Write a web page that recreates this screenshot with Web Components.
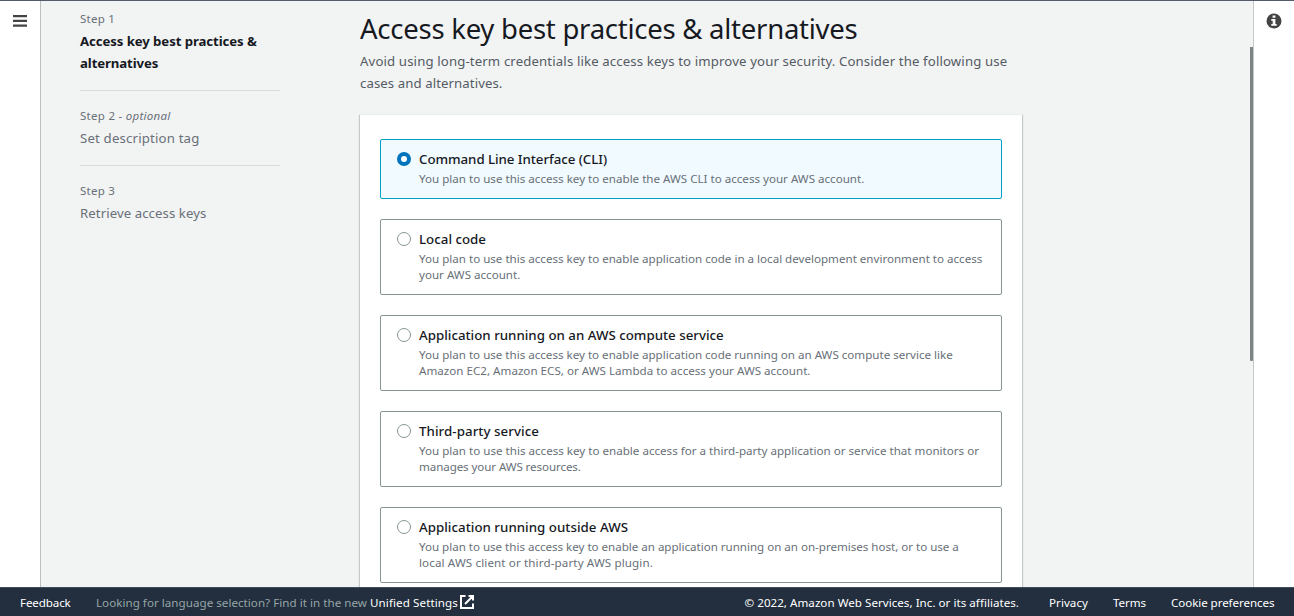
<!DOCTYPE html>
<html lang="en">
<head>
<meta charset="utf-8">
<title>Access key best practices &amp; alternatives</title>
<style>
html,body{margin:0;height:100%;overflow:hidden;font-family:"Noto Sans","Open Sans",sans-serif;color:#16191f;background:#f2f3f3}
</style>
</head>
<body>
<console-app></console-app>
<script>
function define(name, html, init) {
  const t = document.createElement('template');
  t.innerHTML = html;
  customElements.define(name, class extends HTMLElement {
    connectedCallback() {
      if (this.shadowRoot) return;
      this.attachShadow({mode: 'open'}).append(t.content.cloneNode(true));
      if (init) init.call(this, this.shadowRoot);
    }
  });
}

/* One line of text, tracked so that it spans the width given in "w". */
define('text-line', `<style>
:host{display:block;white-space:nowrap}
span{display:inline-block}
</style><span><slot></slot></span>`, function (root) {
  const span = root.querySelector('span');
  const target = parseFloat(this.getAttribute('w'));
  const count = this.textContent.length;
  const natural = span.getBoundingClientRect().width;
  if (target && natural) span.style.letterSpacing = ((target - natural) / count).toFixed(4) + 'px';
});

define('side-rail', `<style>
:host{display:flex;justify-content:center;width:40px;flex:none;background:#fff;box-sizing:border-box;padding-top:12px}
</style><slot></slot>`);

define('menu-icon', `<style>:host{display:block;width:16px;height:16px}svg{display:block}</style>
<svg width="16" height="16" viewBox="0 0 16 16"><path d="M1 3.2h14M1 7.9h14M1 12.6h14" stroke="#444" stroke-width="2.3"/></svg>`);

define('info-icon', `<style>:host{display:block;width:16px;height:16px}svg{display:block}</style>
<svg width="16" height="16" viewBox="0 0 16 16"><circle cx="8" cy="8" r="7.5" fill="#444"/><path d="M6.6 2.4h2.8v2.4H6.6zM5.3 6h4.1v5.1h1.3v1.7H5.3v-1.7h1.4V7.7H5.3z" fill="#fff"/></svg>`);

define('external-icon', `<style>:host{display:block;width:14px;height:14px}svg{display:block}</style>
<svg width="14" height="14" viewBox="0 0 14 14" fill="none" stroke="#fff" stroke-width="2"><path d="M5.5 1H1v12h12V8.5M8.5 1H13v4.5M13 1L5 9"/></svg>`);

define('wizard-step', `<style>
:host{display:block;color:#687078;padding-bottom:16px;margin-bottom:14px;border-bottom:1px solid #d5dbdb}
:host([last]){border:0}
:host([active]) .title{color:#16191f;font-weight:700}
.label{font-size:11.5px;line-height:22px}
.title{font-size:13.2px;line-height:22px}
</style><div class="label"><slot name="label"></slot></div><div class="title"><slot></slot></div>`);

define('wizard-nav', `<style>
:host{display:block;width:200px;flex:none;padding-top:7px}
i{font-style:italic}
</style>
<wizard-step active><text-line slot="label" w="35">Step 1</text-line><text-line w="176.7">Access key best practices &amp;</text-line><text-line w="78.3">alternatives</text-line></wizard-step>
<wizard-step><text-line slot="label" w="90.5">Step 2 - <i>optional</i></text-line><text-line w="119.5">Set description tag</text-line></wizard-step>
<wizard-step last><text-line slot="label" w="35">Step 3</text-line><text-line w="126.4">Retrieve access keys</text-line></wizard-step>`);

define('page-header', `<style>
:host{display:block;padding-top:10px;height:103px}
h1{margin:0;font-size:27.5px;font-weight:400;line-height:36px;height:39px}
p{margin:0;font-size:13.2px;line-height:22px;color:#545b64}
</style><h1><slot name="title"></slot></h1><p><slot></slot></p>`);

define('option-tile', `<style>
:host{display:flex;box-sizing:border-box;border:1px solid #879596;border-radius:2px;background:#fff;padding:8px 16px 11px;gap:8px}
.radio{box-sizing:border-box;width:14px;height:14px;flex:none;border:1px solid #879596;border-radius:50%;background:#fff;margin-top:4px}
:host([checked]){background:#f1faff;border-color:#00a1c9}
:host([checked]) .radio{border:4px solid #0073bb}
.title{font-size:13.3px;font-weight:500;line-height:22px;height:23px;color:#16191f}
.desc{font-size:11.6px;line-height:16px;color:#687078}
</style><div class="radio"></div><div><div class="title"><slot name="title"></slot></div><div class="desc"><slot></slot></div></div>`);

define('tile-panel', `<style>
:host{display:grid;gap:20px;box-sizing:border-box;width:662px;padding:24px 20px;border-top:1px solid #eaeded;background:#fff;
box-shadow:0 1px 1px 0 rgba(0,28,36,.3),1px 1px 1px 0 rgba(0,28,36,.15),-1px 1px 1px 0 rgba(0,28,36,.15)}
</style><slot></slot>`);

define('scroll-thumb', `<style>
:host{position:absolute;right:0;top:46px;width:3px;height:314px;background:#7d8382;border-radius:0 0 1px 1px}
</style>`);

define('console-footer', `<style>
:host{display:flex;align-items:center;box-sizing:border-box;height:29px;flex:none;padding:1px 19.5px 0 20px;background:#232f3e;border-top:1px solid #414d5c;color:#fff;font-size:11.6px;line-height:28px}
.hint{display:flex;align-items:center;margin-left:25.3px;color:#95a5a6}
.hint text-line+text-line{color:#fff;margin-left:3px}
external-icon{margin:-1px 0 0 2px}
.links{display:flex;gap:25px;margin-left:auto}
.links text-line:first-child{margin-right:5px}
</style>
<text-line w="50.7">Feedback</text-line>
<div class="hint"><text-line w="271">Looking for language selection? Find it in the new</text-line><text-line w="88">Unified Settings</text-line><external-icon></external-icon></div>
<div class="links"><text-line w="274.5">© 2022, Amazon Web Services, Inc. or its affiliates.</text-line><text-line w="39">Privacy</text-line><text-line w="33">Terms</text-line><text-line w="103.5">Cookie preferences</text-line></div>`);

define('console-app', `<style>
:host{display:flex;flex-direction:column;height:100vh;box-sizing:border-box;border-top:1px solid #545b6b}
.body{display:flex;flex:1;min-height:0}
main{position:relative;display:flex;gap:80px;flex:1;min-width:0;overflow:hidden;box-sizing:border-box;padding-left:39px;border-left:1px solid #bcc0c1;background:#f2f3f3}
.scroll{border-right:1px solid #c4c8c8}
.content{width:662px}
</style>
<div class="body">
<side-rail><menu-icon></menu-icon></side-rail>
<main class="scroll"><wizard-nav></wizard-nav>
<div class="content">
<page-header><text-line slot="title" w="497.5">Access key best practices &amp; alternatives</text-line>
<text-line w="647.3">Avoid using long-term credentials like access keys to improve your security. Consider the following use</text-line><text-line w="142.5">cases and alternatives.</text-line></page-header>
<tile-panel>
<option-tile checked><text-line slot="title" w="188">Command Line Interface (CLI)</text-line><text-line w="445.3">You plan to use this access key to enable the AWS CLI to access your AWS account.</text-line></option-tile>
<option-tile><text-line slot="title" w="67">Local code</text-line><text-line w="563.3">You plan to use this access key to enable application code in a local development environment to access</text-line><text-line w="101.3">your AWS account.</text-line></option-tile>
<option-tile><text-line slot="title" w="304.7">Application running on an AWS compute service</text-line><text-line w="533.7">You plan to use this access key to enable application code running on an AWS compute service like</text-line><text-line w="391.5">Amazon EC2, Amazon ECS, or AWS Lambda to access your AWS account.</text-line></option-tile>
<option-tile><text-line slot="title" w="120">Third-party service</text-line><text-line w="560">You plan to use this access key to enable access for a third-party application or service that monitors or</text-line><text-line w="161.8">manages your AWS resources.</text-line></option-tile>
<option-tile><text-line slot="title" w="209">Application running outside AWS</text-line><text-line w="539.8">You plan to use this access key to enable an application running on an on-premises host, or to use a</text-line><text-line w="234">local AWS client or third-party AWS plugin.</text-line></option-tile>
</tile-panel>
</div>
<scroll-thumb></scroll-thumb></main>
<side-rail><info-icon></info-icon></side-rail>
</div>
<console-footer></console-footer>`);
</script>
</body>
</html>
